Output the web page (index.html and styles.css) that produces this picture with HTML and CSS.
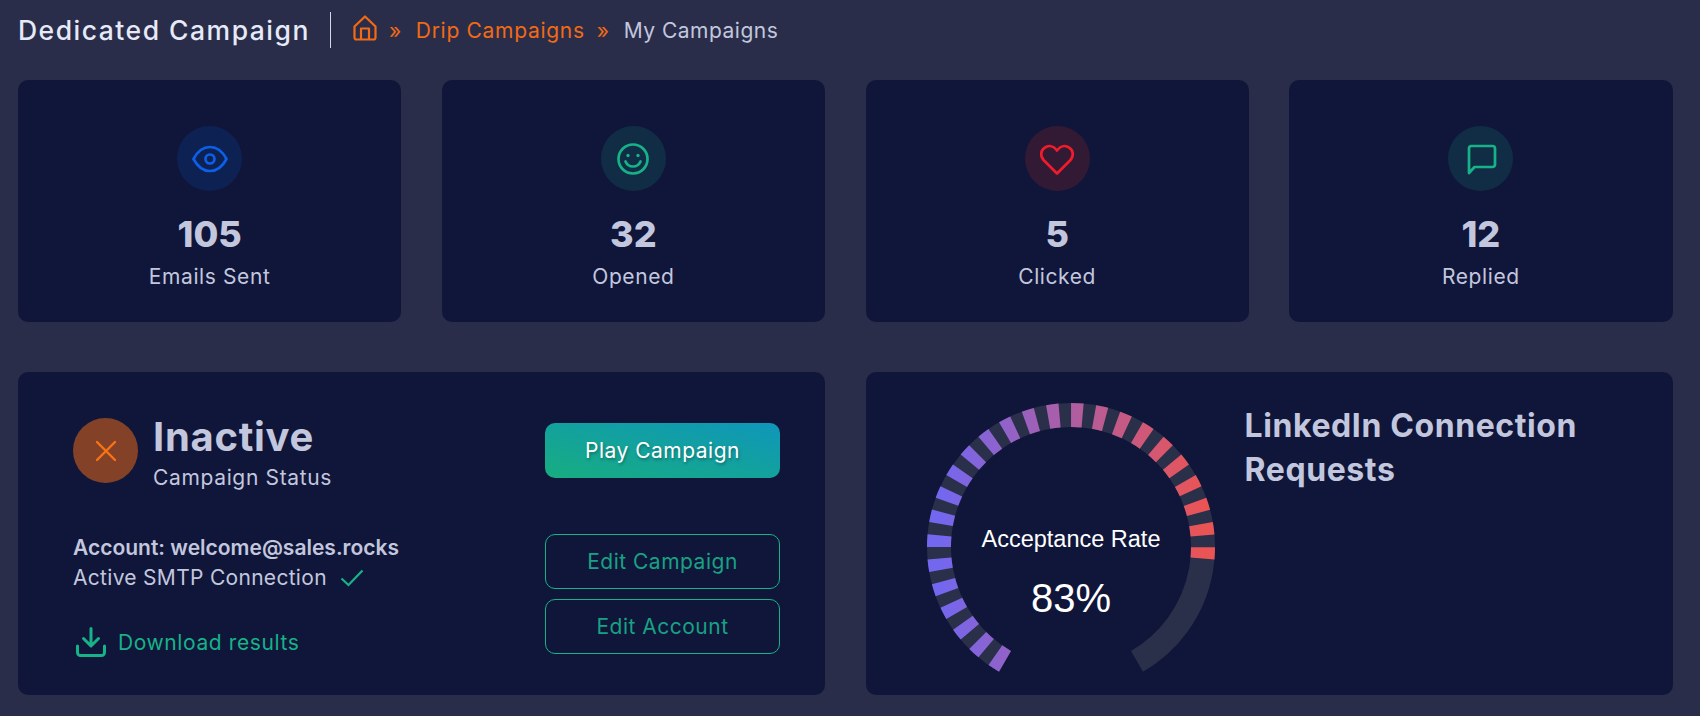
FILE: index.html
```html
<!DOCTYPE html>
<html lang="en">
<head>
    <meta charset="UTF-8">
    <meta name="viewport" content="width=device-width, initial-scale=1.0">
    <title>Dedicated Campaign</title>
    <link rel="stylesheet" href="styles.css">
</head>
<body>
    <header class="page-header">
        <h1>Dedicated Campaign</h1>
        <nav class="breadcrumb">
            <svg class="home-icon" viewBox="0 0 24 26" fill="none" stroke="currentColor" stroke-width="2.200" stroke-linejoin="round">
                <path d="M1.500 11.500 12 1.500l10.500 10v11a2 2 0 0 1-2 2h-17a2 2 0 0 1-2-2z"/>
                <path d="M8 24.500V13.500h8v11"/>
            </svg>
            <span class="sep">»</span>
            <a href="#">Drip Campaigns</a>
            <span class="sep">»</span>
            <span class="current">My Campaigns</span>
        </nav>
    </header>

    <section class="stats">
        <div class="card stat">
            <div class="stat-icon blue">
                <svg width="36" height="36" viewBox="0 0 36 36" fill="none" stroke="currentColor" stroke-width="2.700">
                    <path d="M1.500 18C6 9.500 12 6 18 6s12 3.500 16.500 12C30 26.500 24 30 18 30S6 26.500 1.500 18z" stroke-linejoin="round"/>
                    <circle cx="18" cy="18" r="4.500"/>
                </svg>
            </div>
            <div class="stat-num">105</div>
            <div class="stat-label">Emails Sent</div>
        </div>
        <div class="card stat">
            <div class="stat-icon green">
                <svg width="36" height="36" viewBox="0 0 36 36" fill="none" stroke="currentColor" stroke-width="2.700">
                    <circle cx="18" cy="18" r="14.500"/>
                    <path d="M10.500 20.500c1.500 3.500 4.300 5 7.500 5s6-1.500 7.500-5" stroke-linecap="round"/>
                    <circle cx="13" cy="14.500" r="1.700" fill="currentColor" stroke="none"/>
                    <circle cx="23" cy="14.500" r="1.700" fill="currentColor" stroke="none"/>
                </svg>
            </div>
            <div class="stat-num">32</div>
            <div class="stat-label">Opened</div>
        </div>
        <div class="card stat">
            <div class="stat-icon red">
                <svg width="36" height="36" viewBox="0 0 36 36" fill="none" stroke="currentColor" stroke-width="2.700">
                    <path d="M18 32.500 4.500 19C1 15 1.700 9.500 5.500 6.800 9.500 4 14.500 4.800 18 9.500c3.500-4.700 8.500-5.500 12.500-2.700 3.800 2.700 4.500 8.200 1 12.200z" stroke-linejoin="round"/>
                </svg>
            </div>
            <div class="stat-num">5</div>
            <div class="stat-label">Clicked</div>
        </div>
        <div class="card stat">
            <div class="stat-icon green">
                <svg width="36" height="36" viewBox="0 0 36 36" fill="none" stroke="currentColor" stroke-width="2.700" stroke-linejoin="round">
                    <path d="M6 32V7.500A2.500 2.500 0 0 1 8.500 5h21A2.500 2.500 0 0 1 32 7.500v16a2.500 2.500 0 0 1-2.500 2.500H11.500z"/>
                </svg>
            </div>
            <div class="stat-num">12</div>
            <div class="stat-label">Replied</div>
        </div>
    </section>

    <section class="panels">
        <div class="card campaign">
            <div class="campaign-info">
                <div class="status">
                    <div class="status-icon">
                        <svg width="24" height="24" viewBox="0 0 24 24" fill="none" stroke="currentColor" stroke-width="2.400" stroke-linecap="round">
                            <path d="M3 3l18 18M21 3 3 21"/>
                        </svg>
                    </div>
                    <div>
                        <div class="status-name">Inactive</div>
                        <div class="status-sub">Campaign Status</div>
                    </div>
                </div>
                <div class="account">Account: welcome@sales.rocks</div>
                <div class="smtp">
                    Active SMTP Connection
                    <svg class="check" width="24" height="18" viewBox="0 0 24 18" fill="none" stroke="currentColor" stroke-width="2.200">
                        <path d="M1.500 9.500 8.500 16 22.500 1.500"/>
                    </svg>
                </div>
                <a class="download" href="#">
                    <svg width="30" height="30" viewBox="0 0 30 30" fill="none" stroke="currentColor" stroke-width="3" stroke-linecap="round" stroke-linejoin="round">
                        <path d="M15 1.500v17M7.500 11.500l7.500 7.500 7.500-7.500"/>
                        <path d="M1.500 19v6.500a3 3 0 0 0 3 3h21a3 3 0 0 0 3-3V19"/>
                    </svg>
                    Download results
                </a>
            </div>
            <div class="campaign-actions">
                <button class="btn btn-play">Play Campaign</button>
                <button class="btn btn-outline first">Edit Campaign</button>
                <button class="btn btn-outline">Edit Account</button>
            </div>
        </div>

        <div class="card linkedin">
            <svg class="gauge" width="300" height="300" viewBox="0 0 300 300" fill="none">
                <defs>
                    <linearGradient id="gaugeFill" gradientUnits="userSpaceOnUse" x1="18" y1="0" x2="282" y2="0">
                        <stop offset="0" stop-color="#7367f0"/>
                        <stop offset="1" stop-color="#ea5455"/>
                    </linearGradient>
                </defs>
                <path d="M84 264.300A132 132 0 1 1 216 264.300" stroke="#2a2f4a" stroke-width="24"/>
                <path d="M84 264.300A132 132 0 1 1 281.500 161.500" stroke="url(#gaugeFill)" stroke-width="24" pathLength="245" stroke-dasharray="5 5"/>
                <text class="gauge-label" x="150" y="150">Acceptance Rate</text>
                <text class="gauge-value" x="150" y="215">83%</text>
            </svg>
            <h2>LinkedIn Connection Requests</h2>
        </div>
    </section>
</body>
</html>
```

FILE: styles.css
```css
body {
    font-family: Inter, "Noto Sans", sans-serif;
    background-color: #292d4a;
    margin: 0;
    padding: 0 27.500px 0 18px;
    height: 716px;
    box-sizing: border-box;
    overflow: hidden;
}

.page-header {
    display: flex;
    align-items: center;
    height: 60px;
    margin-bottom: 20px;
}

h1 {
    margin: 0;
    padding-right: 20px;
    font-size: 26.500px;
    font-weight: 500;
    letter-spacing: 1.500px;
    color: #e6e9f6;
}

.breadcrumb {
    display: flex;
    align-items: center;
    height: 36px;
    padding-left: 22px;
    border-left: 1px solid #d5d8e6;
    font-size: 21px;
    letter-spacing: 0.700px;
    color: #f26a14;
}

.breadcrumb a {
    color: #f26a14;
    text-decoration: none;
}

.home-icon {
    width: 24px;
    height: 26px;
    margin-top: -4px;
}

.sep {
    margin: 0 14px 0 12px;
}

.current {
    letter-spacing: 0.500px;
    color: #c3c7de;
}

.card {
    background-color: #10163a;
    border-radius: 10px;
}

.stats {
    display: grid;
    grid-template-columns: repeat(4, 1fr);
    gap: 40.500px;
}

.stat {
    height: 242px;
    padding-top: 46px;
    box-sizing: border-box;
    text-align: center;
}

.stat-icon {
    display: flex;
    justify-content: center;
    align-items: center;
    width: 65px;
    height: 65px;
    margin: 0 auto 18px;
    border-radius: 50%;
}

.stat-icon.blue {
    background-color: #0e2153;
    color: #0d5fe8;
}

.stat-icon.green {
    background-color: #112d46;
    color: #17b287;
}

.stat-icon.red {
    background-color: #321a35;
    color: #ef1c2a;
}

.stat-num {
    font-size: 36px;
    font-weight: 800;
    line-height: 50px;
    color: #c3c7de;
}

.stat-label {
    margin-top: 4px;
    font-size: 21px;
    letter-spacing: 0.600px;
    line-height: 28px;
    color: #c3c7de;
}

.panels {
    display: grid;
    grid-template-columns: 1fr 1fr;
    gap: 40.500px;
    margin-top: 50px;
}

.campaign {
    display: flex;
    justify-content: space-between;
    height: 323px;
    padding: 46px 45px 0 55px;
    box-sizing: border-box;
}

.status {
    display: flex;
    gap: 15px;
    margin-bottom: 42px;
}

.status-icon {
    display: flex;
    justify-content: center;
    align-items: center;
    width: 65px;
    height: 65px;
    border-radius: 50%;
    background-color: #834227;
    color: #f97316;
}

.status-name {
    margin-top: -1px;
    font-size: 40px;
    font-weight: 700;
    letter-spacing: 0.700px;
    line-height: 40px;
    color: #c3c7de;
}

.status-sub {
    margin-top: 8px;
    font-size: 21px;
    letter-spacing: 0.650px;
    line-height: 26px;
    color: #c3c7de;
}

.account {
    font-size: 21px;
    font-weight: 600;
    line-height: 30px;
    color: #c3c7de;
}

.smtp {
    display: flex;
    align-items: center;
    gap: 13px;
    font-size: 21px;
    letter-spacing: 0.300px;
    line-height: 30px;
    color: #c3c7de;
}

.check {
    color: #17b287;
}

.download {
    display: flex;
    align-items: center;
    gap: 12px;
    margin-top: 34px;
    margin-left: 3px;
    font-size: 21px;
    letter-spacing: 0.600px;
    color: #17b287;
    text-decoration: none;
}

.campaign-actions {
    display: flex;
    flex-direction: column;
    gap: 10px;
    width: 235px;
    padding-top: 5px;
}

.btn {
    height: 55px;
    border-radius: 10px;
    font-family: inherit;
    font-size: 21px;
    letter-spacing: 0.500px;
}

.btn-play {
    border: 0;
    background: linear-gradient(to top right, #17ad80, #0f96ba);
    color: #fff;
    text-shadow: 1px 2px 3px rgba(0, 0, 0, 0.3);
}

.btn-outline {
    border: 1px solid #17b287;
    background: transparent;
    color: #17a283;
}

.btn-outline.first {
    margin-top: 46px;
}

.linkedin {
    display: flex;
    gap: 24px;
    padding: 25px 0 0 55px;
    height: 323px;
    box-sizing: border-box;
}

.gauge-label {
    font-family: "Liberation Sans", Arial, sans-serif;
    font-size: 23.500px;
    fill: #fff;
    text-anchor: middle;
}

.gauge-value {
    font-family: "Liberation Sans", Arial, sans-serif;
    font-size: 40px;
    fill: #fff;
    text-anchor: middle;
}

h2 {
    margin: 7px 0 0;
    width: 380px;
    font-size: 32px;
    font-weight: 700;
    letter-spacing: 0.600px;
    line-height: 44px;
    color: #c3c7de;
}
```
